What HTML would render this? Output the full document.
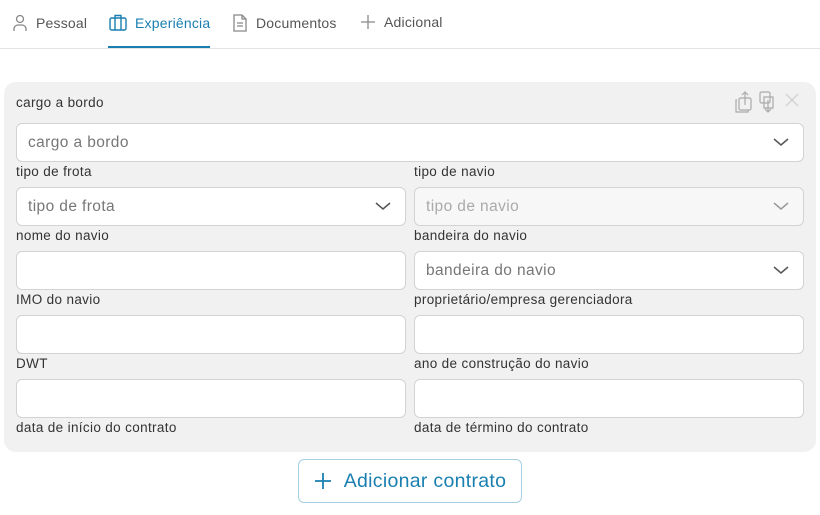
<!DOCTYPE html>
<html><head><style>
*{box-sizing:border-box;margin:0;padding:0}
body{width:820px;height:515px;background:#fff;font-family:"Liberation Sans",sans-serif;position:relative;overflow:hidden;color:#333}
.tabs{position:absolute;top:0;left:0;width:820px;height:49px;border-bottom:1px solid #e4e4e4}
.tab{position:absolute;top:14px;font-size:14px;color:#555;display:flex;align-items:center;gap:8px;letter-spacing:0.2px}
.tab.act{color:#1a7fb0}
.ul{position:absolute;left:108px;top:46px;width:102px;height:2px;background:#1a7fb0}
.card{position:absolute;left:4px;top:82px;width:812px;height:370px;background:#f2f1f1;border-radius:12px}
.lbl{position:absolute;font-size:13.5px;color:#333;letter-spacing:0.35px}
.in{position:absolute;height:39px;background:#fff;border:1px solid #d3d3d3;border-radius:6px;font-size:15.5px;color:#777;padding:0 11px;line-height:37px;letter-spacing:0.4px}
.in.dis{background:#f7f7f7;color:#aaa}
.chev{position:absolute;right:14px;top:13px}
.btn{position:absolute;left:298px;top:459px;width:224px;height:44px;border:1px solid #a8cfe0;border-radius:6px;color:#1a7fb0;font-size:19.5px;display:flex;align-items:center;justify-content:center;gap:12px;letter-spacing:0.3px}
</style></head><body>
<div class="tabs">
<div class="tab" style="left:12px"><svg width="16" height="18" viewBox="0 0 16 18" fill="none" stroke="#888" stroke-width="1.3"><circle cx="8" cy="5" r="3.5"/><path d="M2 17v-2a4 4 0 0 1 4-4h4a4 4 0 0 1 4 4v2"/></svg>Pessoal</div>
<div class="tab act" style="left:109px"><svg width="18" height="17" viewBox="0 0 18 17" fill="none" stroke="#1a7fb0" stroke-width="1.4"><rect x="1" y="4" width="16" height="12" rx="1.5"/><path d="M6 4V1.5h6V4M6 4v12M12 4v12"/></svg>Experiência</div>
<div class="tab" style="left:232px"><svg width="16" height="18" viewBox="0 0 16 18" fill="none" stroke="#888" stroke-width="1.3"><path d="M2 1h8l4 4v12H2z"/><path d="M10 1v4h4M5 9h6M5 12h6"/></svg>Documentos</div>
<div class="tab" style="left:360px"><svg width="16" height="16" viewBox="0 0 16 16" stroke="#888" stroke-width="1.3"><path d="M8 1v14M1 8h14"/></svg>Adicional</div>
</div>
<div class="ul"></div>
<div class="card"></div>
<svg style="position:absolute;left:734px;top:90px" width="66" height="24" viewBox="0 0 66 24" fill="none" stroke="#aaa" stroke-width="1.2"><path d="M3 10h-1v12h12v-2"/><rect x="5" y="8" width="12" height="12" rx="1.5"/><path d="M11 15V2M8 5l3-3 3 3"/><rect x="26" y="2" width="10" height="11" rx="1.5"/><path d="M30 7h9v11h-9zM34 10v12M31 19l3 3 3-3"/><path d="M52 4l12 12M64 4L52 16" stroke="#ccc"/></svg>
<div class="lbl" style="left:16px;top:95px">cargo a bordo</div>
<div class="in" style="left:16px;top:123px;width:788px">cargo a bordo<svg class="chev" width="16" height="10" viewBox="0 0 16 10" fill="none" stroke="#555" stroke-width="1.5"><path d="M1 2l7 6 7-6"/></svg></div>
<div class="lbl" style="left:16px;top:164px">tipo de frota</div>
<div class="lbl" style="left:414px;top:164px">tipo de navio</div>
<div class="in" style="left:16px;top:187px;width:390px">tipo de frota<svg class="chev" width="16" height="10" viewBox="0 0 16 10" fill="none" stroke="#555" stroke-width="1.5"><path d="M1 2l7 6 7-6"/></svg></div>
<div class="in dis" style="left:414px;top:187px;width:390px">tipo de navio<svg class="chev" width="16" height="10" viewBox="0 0 16 10" fill="none" stroke="#999" stroke-width="1.5"><path d="M1 2l7 6 7-6"/></svg></div>
<div class="lbl" style="left:16px;top:228px">nome do navio</div>
<div class="lbl" style="left:414px;top:228px">bandeira do navio</div>
<div class="in" style="left:16px;top:251px;width:390px"></div>
<div class="in" style="left:414px;top:251px;width:390px">bandeira do navio<svg class="chev" width="16" height="10" viewBox="0 0 16 10" fill="none" stroke="#555" stroke-width="1.5"><path d="M1 2l7 6 7-6"/></svg></div>
<div class="lbl" style="left:16px;top:292px">IMO do navio</div>
<div class="lbl" style="left:414px;top:292px">proprietário/empresa gerenciadora</div>
<div class="in" style="left:16px;top:315px;width:390px"></div>
<div class="in" style="left:414px;top:315px;width:390px"></div>
<div class="lbl" style="left:16px;top:356px">DWT</div>
<div class="lbl" style="left:414px;top:356px">ano de construção do navio</div>
<div class="in" style="left:16px;top:379px;width:390px"></div>
<div class="in" style="left:414px;top:379px;width:390px"></div>
<div class="lbl" style="left:16px;top:420px">data de início do contrato</div>
<div class="lbl" style="left:414px;top:420px">data de término do contrato</div>
<div class="btn"><svg width="18" height="18" viewBox="0 0 18 18" stroke="#1a7fb0" stroke-width="1.8"><path d="M9 1v16M1 9h16"/></svg>Adicionar contrato</div>
</body></html>
